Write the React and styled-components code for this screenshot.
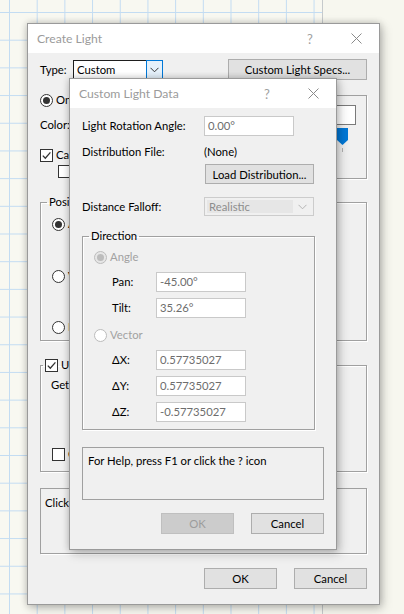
import React from 'react';
import styled, { createGlobalStyle } from 'styled-components';

const GlobalStyle = createGlobalStyle`
  html, body { margin: 0; padding: 0; width: 404px; height: 614px; overflow: hidden; }
  body { font-family: Lato, "Liberation Sans", sans-serif; font-size: 11.3px; }
  *, *::before, *::after { box-sizing: border-box; }
`;

const Desktop = styled.div`
  position: relative;
  width: 404px;
  height: 614px;
  display: flex;
  background: #f7f7ef;
  overflow: hidden;
`;

const GridCanvas = styled.div`
  width: 323px;
  height: 100%;
  border-right: 1px solid #c6cacc;
  background-color: #f8f8f1;
  background-image:
    linear-gradient(to right, #c3dcf2 1px, transparent 1px),
    linear-gradient(to bottom, #c3dcf2 1px, transparent 1px);
  background-size: 27.7px 27.7px;
  background-position: 9px 12px;
`;

const Window = styled.div`
  position: absolute;
  left: ${(p) => p.$x}px;
  top: ${(p) => p.$y}px;
  width: ${(p) => p.$w}px;
  display: flex;
  flex-direction: column;
  background: #f0f0f0;
  border: 1px solid #9a9a9a;
  box-shadow: 0 0 7px rgba(0, 0, 0, 0.22), 3px 4px 10px rgba(0, 0, 0, 0.18);
  color: #000;
  font-size: 11.3px;
`;

const TitleBar = styled.div`
  height: 29px;
  display: flex;
  align-items: center;
  background: #ffffff;
  padding-left: 9px;
`;

const TitleText = styled.div`
  flex: 1;
  font-size: 12.2px;
  color: #9b9b9b;
`;

const CaptionButton = styled.div`
  width: 46px;
  height: 29px;
  display: flex;
  align-items: center;
  justify-content: center;
  color: #a0a0a0;
  font-size: 13px;
`;

const Body = styled.div`
  display: flex;
  flex-direction: column;
  padding: ${(p) => p.$pad};
`;

const Row = styled.div`
  display: flex;
  align-items: center;
  height: ${(p) => p.$h || 16}px;
  margin-top: ${(p) => p.$mt || 0}px;
  margin-left: ${(p) => p.$ml || 0}px;
  white-space: nowrap;
`;

const Label = styled.span`
  width: ${(p) => (p.$w ? `${p.$w}px` : 'auto')};
  flex-shrink: 0;
  color: ${(p) => (p.$disabled ? '#a2a2a2' : '#000')};
  line-height: 16px;
`;

const PushButton = styled.div`
  width: ${(p) => p.$w}px;
  height: ${(p) => p.$h || 21}px;
  margin-left: ${(p) => p.$ml || 0}px;
  display: flex;
  align-items: center;
  justify-content: center;
  background: ${(p) => (p.$disabled ? '#cccccc' : '#e1e1e1')};
  border: 1px solid ${(p) => (p.$disabled ? '#bfbfbf' : '#adadad')};
  color: ${(p) => (p.$disabled ? '#9c9c9c' : '#000')};
  flex-shrink: 0;
`;

const ButtonBar = styled.div`
  display: flex;
  justify-content: flex-end;
  gap: 17px;
  margin-top: ${(p) => p.$mt}px;
`;

const Combo = styled.div`
  width: 90px;
  height: 20px;
  display: flex;
  background: #fff;
  border: 1px solid #1e1e1e;
`;

const ComboText = styled.div`
  flex: 1;
  padding-left: 3px;
  line-height: 18px;
`;

const DropButton = styled.div`
  width: 17px;
  margin: -1px -1px -1px 0;
  display: flex;
  align-items: center;
  justify-content: center;
  border: 1px solid #0078d7;
  background: #e5f1fb;
`;

const DisabledCombo = styled.div`
  width: 110px;
  height: 19px;
  display: flex;
  align-items: stretch;
  padding: 2px;
  background: #f0f0f0;
  border: 1px solid #cccccc;
`;

const DisabledComboText = styled.div`
  flex: 1;
  padding-left: 2px;
  background: #e6e6e6;
  color: #8d8d8d;
  line-height: 13px;
`;

const DisabledArrow = styled.div`
  width: 18px;
  display: flex;
  align-items: center;
  justify-content: center;
`;

const TextField = styled.div`
  width: ${(p) => p.$w || 90}px;
  height: 20px;
  padding-left: 3px;
  background: #ffffff;
  border: 1px solid #c9c9c9;
  color: #6d6d6d;
  line-height: 18px;
  flex-shrink: 0;
`;

const RadioDot = styled.span`
  width: 13px;
  height: 13px;
  flex-shrink: 0;
  border-radius: 50%;
  border: 1px solid ${(p) => (p.$disabled ? '#bcbcbc' : '#333')};
  background: ${(p) => (p.$disabled && p.$checked ? '#e6e6e6' : '#fff')};
  display: flex;
  align-items: center;
  justify-content: center;
  margin-right: 3px;
  &::after {
    content: '';
    width: 7px;
    height: 7px;
    border-radius: 50%;
    background: ${(p) => (p.$checked ? (p.$disabled ? '#bcbcbc' : '#333') : 'transparent')};
  }
`;

const CheckBox = styled.span`
  width: 13px;
  height: 13px;
  flex-shrink: 0;
  border: 1px solid #333;
  background: #fff;
  display: flex;
  align-items: center;
  justify-content: center;
  margin-right: 3px;
`;

const Group = styled.fieldset`
  margin: ${(p) => p.$mt || 0}px 0 0 0;
  padding: 0;
  width: ${(p) => (p.$w ? `${p.$w}px` : 'auto')};
  min-width: 0;
  border: 1px solid #a0a0a0;
  box-shadow: 1px 1px 0 #ffffff, inset 1px 1px 0 #ffffff;
`;

const Legend = styled.legend`
  display: flex;
  align-items: center;
  height: 16px;
  line-height: 16px;
  margin-left: ${(p) => p.$ml ?? 6}px;
  padding: 0 2px;
`;

const GroupContent = styled.div`
  display: flex;
  flex-direction: column;
  padding: ${(p) => p.$pad};
`;

const PlainBox = styled.div`
  margin-top: ${(p) => p.$mt || 0}px;
  height: ${(p) => p.$h}px;
  padding: ${(p) => p.$pad};
  border: 1px solid #a0a0a0;
  box-shadow: 1px 1px 0 #ffffff;
  line-height: 16px;
`;

const TopRow = styled.div`
  display: flex;
  margin-top: 12px;
`;

const LeftCol = styled.div`
  display: flex;
  flex-direction: column;
`;

const SideGroup = styled.div`
  margin-left: auto;
  margin-top: 3px;
  width: 176px;
  height: 84px;
  padding: 9px 10px 0 10px;
  display: flex;
  flex-direction: column;
  align-items: stretch;
  border: 1px solid #a0a0a0;
  box-shadow: 1px 1px 0 #ffffff;
`;

const ValueBox = styled.div`
  height: 20px;
  background: #fff;
  border: 1px solid #7a7a7a;
`;

const SliderRow = styled.div`
  display: flex;
  justify-content: flex-end;
  padding-right: 8px;
  margin-top: 3px;
`;

const FormGrid = styled.div`
  display: grid;
  grid-template-columns: 122px auto;
  align-items: center;
  margin-top: ${(p) => p.$mt || 0}px;
  height: ${(p) => p.$h}px;
`;

const FieldRow = styled.div`
  display: grid;
  grid-template-columns: 44px 90px;
  align-items: center;
  height: 20px;
  margin-top: ${(p) => p.$mt || 0}px;
  padding-left: 18px;
`;

const HelpBox = styled.div`
  margin-top: 17px;
  height: 53px;
  padding: 5px 5px;
  border: 1px solid #a0a0a0;
  line-height: 16px;
`;

const Chevron = ({ color = '#333' }) => (
  <svg width="9" height="6" viewBox="0 0 9 6">
    <path d="M0.5 0.8 L4.5 4.8 L8.5 0.8" fill="none" stroke={color} strokeWidth="1" />
  </svg>
);

const CloseX = () => (
  <svg width="11" height="11" viewBox="0 0 11 11">
    <path d="M0.5 0.5 L10.5 10.5 M10.5 0.5 L0.5 10.5" stroke="#8a8a8a" strokeWidth="1" fill="none" />
  </svg>
);

const Check = () => (
  <svg width="11" height="11" viewBox="0 0 11 11">
    <path d="M1.8 5.6 L4.3 8.2 L9.4 2.4" fill="none" stroke="#333" strokeWidth="1.3" />
  </svg>
);

const SliderThumb = () => (
  <svg width="11" height="25" viewBox="0 0 11 25">
    <path d="M0 0 H11 V12 L5.5 17 L0 12 Z" fill="#0078d7" />
    <rect x="5" y="20" width="1" height="4" fill="#b0b0b0" />
  </svg>
);

const Caption = ({ title }) => (
  <TitleBar>
    <TitleText>{title}</TitleText>
    <CaptionButton>?</CaptionButton>
    <CaptionButton>
      <CloseX />
    </CaptionButton>
  </TitleBar>
);

const CreateLightDialog = () => (
  <Window $x={27} $y={23} $w={353}>
    <Caption title="Create Light" />
    <Body $pad="6px 12px 15px 12px">
      <Row $h={21}>
        <Label $w={33}>Type:</Label>
        <Combo>
          <ComboText>Custom</ComboText>
          <DropButton>
            <Chevron />
          </DropButton>
        </Combo>
        <PushButton $w={139} $ml={65}>Custom Light Specs...</PushButton>
      </Row>

      <TopRow>
        <LeftCol>
          <Row>
            <RadioDot $checked />
            <Label>On</Label>
          </Row>
          <Row $mt={9}>
            <Label>Color:</Label>
          </Row>
          <Row $mt={14}>
            <CheckBox>
              <Check />
            </CheckBox>
            <Label>Cast</Label>
          </Row>
          <Row $ml={18}>
            <CheckBox />
          </Row>
        </LeftCol>
        <SideGroup>
          <ValueBox />
          <SliderRow>
            <SliderThumb />
          </SliderRow>
        </SideGroup>
      </TopRow>

      <Group $mt={15}>
        <Legend>Position</Legend>
        <GroupContent $pad="6px 0 5px 11px">
          <Row>
            <RadioDot $checked />
            <Label>A</Label>
          </Row>
          <Row $mt={36}>
            <RadioDot />
            <Label>V</Label>
          </Row>
          <Row $mt={35}>
            <RadioDot />
            <Label>L</Label>
          </Row>
        </GroupContent>
      </Group>

      <Group $mt={16}>
        <Legend $ml={2}>
          <CheckBox>
            <Check />
          </CheckBox>
          <Label>Use</Label>
        </Legend>
        <GroupContent $pad="4px 0 9px 10px">
          <Row>
            <Label>Get</Label>
          </Row>
          <Row $mt={53} $ml={1}>
            <CheckBox />
            <Label>C</Label>
          </Row>
        </GroupContent>
      </Group>

      <PlainBox $mt={16} $h={66} $pad="6px 4px">
        Click
      </PlainBox>

      <ButtonBar $mt={14}>
        <PushButton $w={73}>OK</PushButton>
        <PushButton $w={73}>Cancel</PushButton>
      </ButtonBar>
    </Body>
  </Window>
);

const CustomLightDataDialog = () => (
  <Window $x={69} $y={78} $w={268}>
    <Caption title="Custom Light Data" />
    <Body $pad="8px 12px 15px 12px">
      <FormGrid $h={20}>
        <Label>Light Rotation Angle:</Label>
        <TextField>0.00°</TextField>
      </FormGrid>
      <FormGrid $h={16} $mt={8}>
        <Label>Distribution File:</Label>
        <Label>(None)</Label>
      </FormGrid>
      <FormGrid $h={20} $mt={4}>
        <span />
        <PushButton $w={109} $h={20} $ml={1}>Load Distribution...</PushButton>
      </FormGrid>
      <FormGrid $h={19} $mt={13}>
        <Label>Distance Falloff:</Label>
        <DisabledCombo>
          <DisabledComboText>Realistic</DisabledComboText>
          <DisabledArrow>
            <Chevron color="#b4b4b4" />
          </DisabledArrow>
        </DisabledCombo>
      </FormGrid>

      <Group $mt={12} $w={233}>
        <Legend>Direction</Legend>
        <GroupContent $pad="5px 0 7px 11px">
          <Row>
            <RadioDot $checked $disabled />
            <Label $disabled>Angle</Label>
          </Row>
          <FieldRow $mt={7}>
            <Label>Pan:</Label>
            <TextField>-45.00°</TextField>
          </FieldRow>
          <FieldRow $mt={6}>
            <Label>Tilt:</Label>
            <TextField>35.26°</TextField>
          </FieldRow>
          <Row $mt={9}>
            <RadioDot $disabled />
            <Label $disabled>Vector</Label>
          </Row>
          <FieldRow $mt={7}>
            <Label>ΔX:</Label>
            <TextField>0.57735027</TextField>
          </FieldRow>
          <FieldRow $mt={6}>
            <Label>ΔY:</Label>
            <TextField>0.57735027</TextField>
          </FieldRow>
          <FieldRow $mt={6}>
            <Label>ΔZ:</Label>
            <TextField>-0.57735027</TextField>
          </FieldRow>
        </GroupContent>
      </Group>

      <HelpBox>For Help, press F1 or click the ? icon</HelpBox>

      <ButtonBar $mt={13}>
        <PushButton $w={73} $disabled>OK</PushButton>
        <PushButton $w={73}>Cancel</PushButton>
      </ButtonBar>
    </Body>
  </Window>
);

export default function App() {
  return (
    <>
      <GlobalStyle />
      <Desktop>
        <GridCanvas />
        <CreateLightDialog />
        <CustomLightDataDialog />
      </Desktop>
    </>
  );
}
